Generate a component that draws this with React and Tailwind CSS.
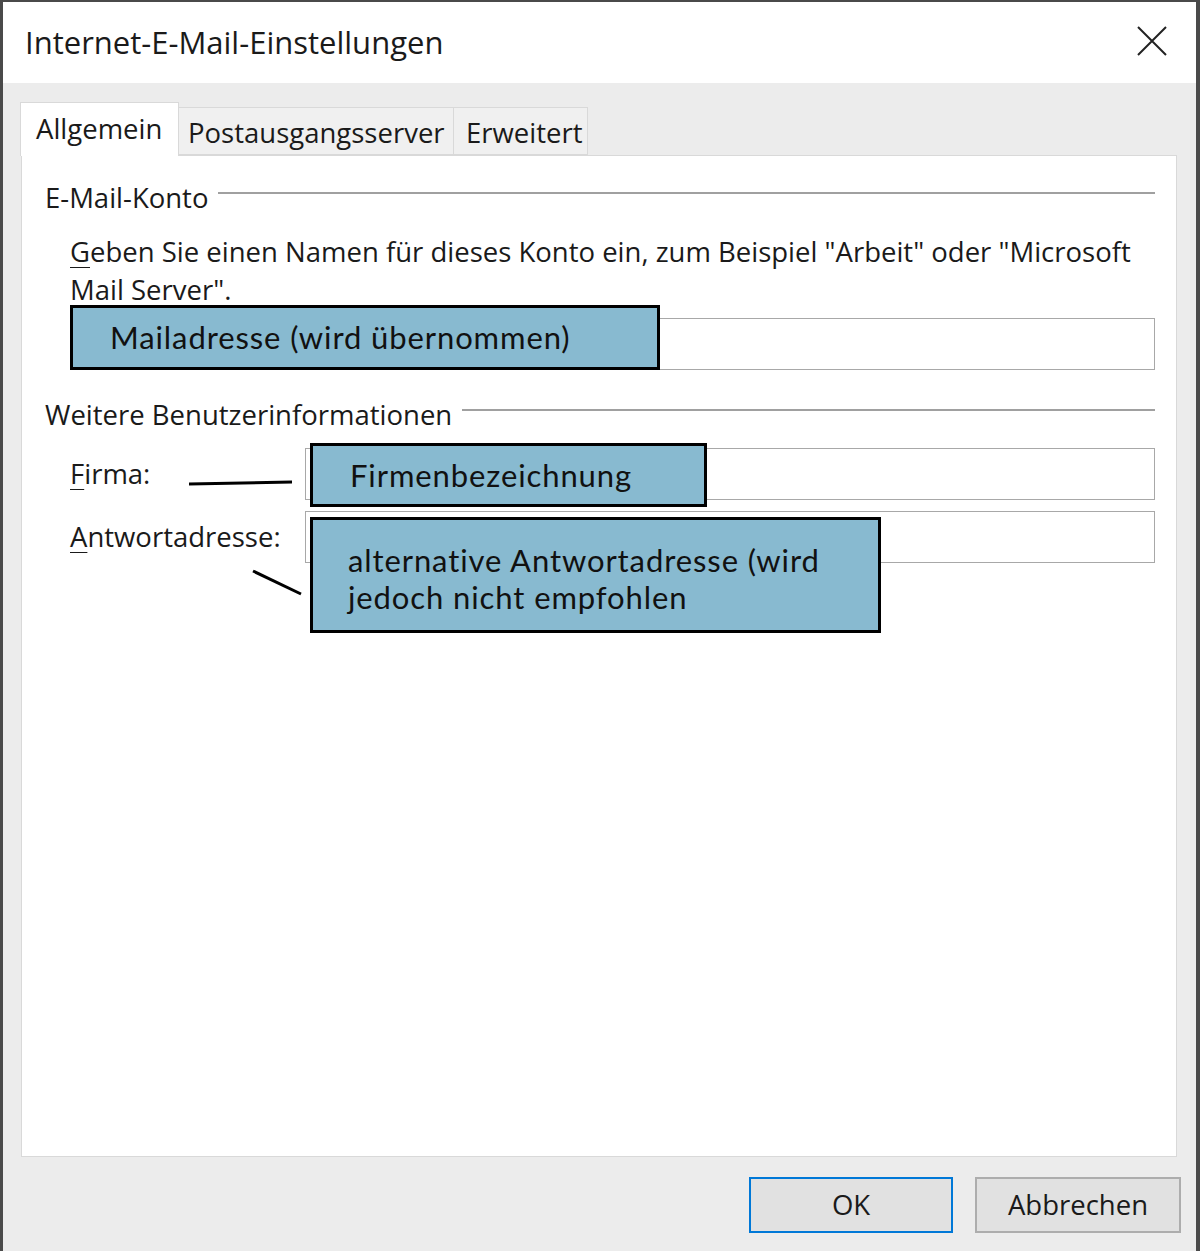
import React from "react";

const ui = { fontFamily: '"Open Sans", "Noto Sans", sans-serif' };
const callout = { fontFamily: 'Lato, "Noto Sans", sans-serif' };

const GroupHeader = ({ children }) => (
  <div className="flex items-center h-[38px]">
    <span className="whitespace-nowrap">{children}</span>
    <div className="flex-1 h-[2px] bg-[#a0a0a0] ml-[10px] mb-[10px]" />
  </div>
);

const Field = ({ className = "" }) => (
  <div className={`h-[52px] border border-[#a8a8a8] bg-white ${className}`} />
);

const Callout = ({ className, children }) => (
  <div
    style={callout}
    className={`absolute bg-[#88bad0] border-[3px] border-black text-[31px] tracking-[0.9px] text-[#111] ${className}`}
  >
    {children}
  </div>
);

export default function App() {
  return (
    <div
      style={ui}
      className="w-[1200px] h-[1251px] flex flex-col bg-[#ececec] border-l-[3px] border-r-[4px] border-t-2 border-[#4a4a4a] text-[#1a1a1a] overflow-hidden"
    >
      {/* Title bar */}
      <div className="h-[81px] bg-white flex items-center justify-between pl-[22px] pr-[29px] shrink-0">
        <h1 className="text-[31px] font-normal">Internet-E-Mail-Einstellungen</h1>
        <svg width="30" height="30" viewBox="0 0 30 30" className="mb-[4px]">
          <path d="M1 1L29 29M29 1L1 29" stroke="#222" strokeWidth="2" />
        </svg>
      </div>

      {/* Body */}
      <div className="flex-1 flex flex-col pl-[17px] pr-[15px]">
        {/* Tabs */}
        <div className="flex items-end mt-[19px] text-[27.5px]">
          <div className="h-[54px] w-[159px] bg-white border border-b-0 border-[#d9d9d9] pl-[15px] pt-[5px] relative z-10 -mb-px">
            Allgemein
          </div>
          <div className="h-[48px] w-[275px] bg-[#f0f0f0] border border-l-0 border-[#d9d9d9] pl-[9px] pt-[4px]">
            Postausgangsserver
          </div>
          <div className="h-[48px] w-[134px] bg-[#f0f0f0] border border-l-0 border-[#d9d9d9] pl-[12px] pt-[4px]">
            Erweitert
          </div>
        </div>

        {/* Panel */}
        <div className="relative ml-px w-[1156px] h-[1002px] bg-white border border-[#d9d9d9] pl-[23px] pr-[21px] pt-[23px] text-[27.5px]">
          <GroupHeader>E-Mail-Konto</GroupHeader>

          <div className="pl-[25px] mt-[16px] leading-[38px] whitespace-nowrap">
            <span className="underline underline-offset-[5px] decoration-1">G</span>eben Sie einen Namen für dieses Konto ein, zum Beispiel "Arbeit" oder "Microsoft
            <br />
            Mail Server".
          </div>

          <Field className="ml-[25px] mt-[9px]" />

          <div className="mt-[26px]">
            <GroupHeader>Weitere Benutzerinformationen</GroupHeader>
          </div>

          <div className="flex items-center mt-[14px] pl-[25px]">
            <span className="w-[235px] shrink-0">
              <span className="underline underline-offset-[5px] decoration-1">F</span>irma:
            </span>
            <Field className="flex-1" />
          </div>
          <div className="flex items-center mt-[11px] pl-[25px]">
            <span className="w-[235px] shrink-0">
              <span className="underline underline-offset-[5px] decoration-1">A</span>ntwortadresse:
            </span>
            <Field className="flex-1" />
          </div>

          {/* Annotation overlays */}
          <svg className="absolute inset-0 pointer-events-none" width="1156" height="1002">
            <path d="M167 328L270 326" stroke="#000" strokeWidth="3" />
            <path d="M231 415L279 438" stroke="#000" strokeWidth="3" />
          </svg>
          <Callout className="left-[48px] top-[149px] w-[590px] h-[65px] flex items-center pl-[37px]">
            Mailadresse (wird übernommen)
          </Callout>
          <Callout className="left-[288px] top-[287px] w-[397px] h-[64px] flex items-center pl-[37px]">
            Firmenbezeichnung
          </Callout>
          <Callout className="left-[288px] top-[361px] w-[571px] h-[116px] pl-[35px] pt-[22px] leading-[37px]">
            alternative Antwortadresse (wird
            <br />
            jedoch nicht empfohlen
          </Callout>
        </div>

        {/* Buttons */}
        <div className="flex justify-end gap-[22px] mt-[20px] text-[27.5px]">
          <button className="w-[204px] h-[56px] bg-[#e1e1e1] border-2 border-[#0078d7]">OK</button>
          <button className="w-[206px] h-[56px] bg-[#e1e1e1] border-2 border-[#adadad]">Abbrechen</button>
        </div>
      </div>
    </div>
  );
}
